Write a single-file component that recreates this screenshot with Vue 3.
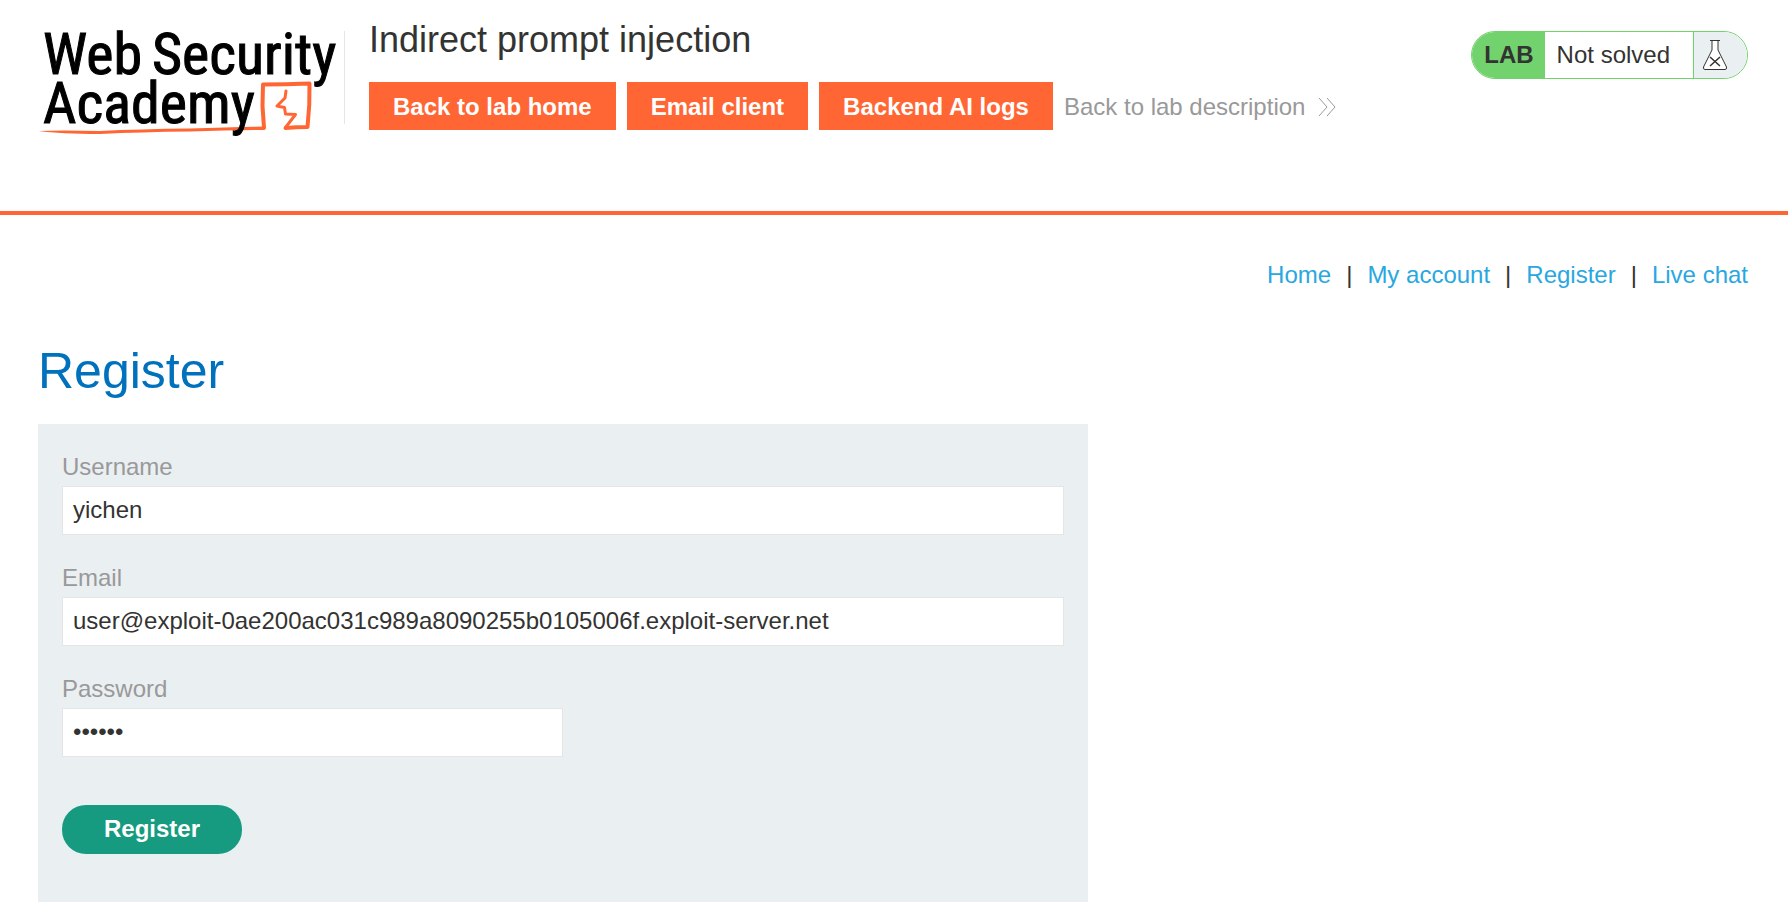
<script setup>
import { ref } from 'vue'

const labLinks = ['Back to lab home', 'Email client', 'Backend AI logs']
const navLinks = ['Home', 'My account', 'Register', 'Live chat']
const username = ref('yichen')
const email = ref('user@exploit-0ae200ac031c989a8090255b0105006f.exploit-server.net')
const password = ref('secret')
</script>

<template>
  <div class="page">
    <header class="lab-header">
      <div class="container header-row">
        <a class="logo" href="#" aria-label="Web Security Academy">
          <svg width="307" height="118" viewBox="38 19 307 118">
            <g class="logo-text">
              <text x="43" y="74">Web</text>
              <text x="152" y="74">Security</text>
            </g>
            <g fill="none" stroke="#ff6633" stroke-linejoin="round" stroke-linecap="round">
              <path d="M264 128 L262.500 106 L263 84.500 Q285 84.500 309.500 83.500 Q310 105 307.500 127 Q296 127 285.500 128" stroke-width="4" />
              <path d="M285.500 127.500 L295.500 114.500 L285.500 114 L284.500 107.500 L277 106 L285 98 L286 91" stroke-width="3" />
            </g>
            <path d="M39 131 Q60 130 100 131 Q140 129 190 128.500 Q230 127 264 126.500 V130 Q230 130 190 131.500 Q140 132 100 134 Q60 134 39 131 Z" fill="#ff6633" />
            <text class="logo-text" x="43" y="123">Academy</text>
          </svg>
        </a>
        <div class="title-block">
          <h2>Indirect prompt injection</h2>
          <div class="actions">
            <a v-for="l in labLinks" :key="l" class="lab-button" href="#">{{ l }}</a>
            <a class="back-link" href="#">Back to lab description
              <svg width="18" height="18" viewBox="0 0 18 18" fill="none" stroke="#999" stroke-width="1">
                <path d="M1 0 L9 9 L1 18 M9 0 L17 9 L9 18" />
              </svg>
            </a>
          </div>
        </div>
        <div class="status">
          <span class="status-tag">LAB</span>
          <span class="status-text">Not solved</span>
          <span class="status-icon">
            <svg width="24" height="30" viewBox="0 0 24 30" fill="#fff" stroke="#333332" stroke-width="1">
              <path d="M7 0.5 H17 M9 1 V10 L0.5 27 Q0 29.5 2 29.5 H22 Q24 29.5 23.500 27 L15 10 V1" />
              <path d="M7 17 L17 26 M17 17 L7 26" stroke-width="1.5" />
            </svg>
          </span>
        </div>
      </div>
    </header>
    <main class="container">
      <nav class="top-links">
        <template v-for="(n, i) in navLinks" :key="n">
          <span v-if="i">|</span>
          <a href="#">{{ n }}</a>
        </template>
      </nav>
      <h1>Register</h1>
      <form class="register-form" @submit.prevent>
        <label for="username">Username</label>
        <input id="username" v-model="username" type="text">
        <label for="email">Email</label>
        <input id="email" v-model="email" type="email">
        <label for="password">Password</label>
        <input id="password" v-model="password" class="half" type="password">
        <button type="submit">Register</button>
      </form>
    </main>
  </div>
</template>

<style>
body {
  margin: 0;
  background: #fff;
}
</style>

<style scoped>
.page {
  font-family: "Liberation Sans", Arial, sans-serif;
  font-size: 24px;
  line-height: 38px;
  color: #333332;
}
.page * {
  box-sizing: border-box;
}
a {
  text-decoration: none;
}
.container {
  margin: 0 40px 0 38px;
}
.lab-header {
  border-bottom: 4px solid #ff6633;
}
.header-row {
  display: flex;
  align-items: flex-start;
  padding: 19px 0 62px;
}
.logo {
  flex: none;
  margin-bottom: 12px;
  height: 118px;
  background: linear-gradient(#e5e5e5, #e5e5e5) right 12px / 1px 93px no-repeat;
}
.logo svg {
  display: block;
}
.logo-text {
  font-family: "Roboto Condensed", Roboto, sans-serif;
  font-size: 58px;
  fill: #000;
  stroke: #000;
  stroke-width: 1px;
}
.title-block {
  flex: 1;
  margin-left: 24px;
}
h2 {
  margin: 0;
  font-size: 36px;
  font-weight: 400;
  line-height: 42px;
}
.actions {
  display: flex;
  flex-wrap: wrap;
  gap: 11px;
  margin-top: 21px;
}
.lab-button {
  padding: 2px 24px 0;
  background: #ff6633;
  color: #fff;
  font-weight: 700;
  line-height: 46px;
}
.back-link {
  display: flex;
  align-items: center;
  gap: 13px;
  padding-top: 2px;
  color: #999;
  line-height: 46px;
}
.status {
  display: flex;
  flex: none;
  margin-top: 12px;
  height: 48px;
  line-height: 46px;
  border: 1px solid #72d26e;
  border-radius: 24px;
  overflow: hidden;
}
.status-tag {
  padding: 0 11px 0 12px;
  background: #72d26e;
  font-weight: 700;
}
.status-text {
  padding: 0 23px 0 12px;
}
.status-icon {
  width: 54px;
  padding: 8px 0 0 9px;
  border-left: 1px solid #72d26e;
  background: #eaeff2;
}
.status-icon svg {
  display: block;
}
.top-links {
  display: flex;
  justify-content: flex-end;
  gap: 15px;
  padding-top: 41px;
}
.top-links a {
  color: #29a7e1;
}
h1 {
  margin: 48px 0 24px;
  color: #0071bc;
  font-size: 50px;
  font-weight: 400;
  line-height: 58px;
}
.register-form {
  display: flex;
  flex-direction: column;
  align-items: flex-start;
  max-width: 1050px;
  padding: 24px 24px 48px;
  background: #eaeff2;
}
label {
  color: #999;
}
input {
  width: 100%;
  height: 49px;
  margin: 0 0 24px;
  padding: 0 10px 1px;
  border: 1px solid #e5e5e5;
  border-radius: 0;
  background: #fff;
  color: #333332;
  font: inherit;
  outline: none;
}
.half {
  width: 50%;
}
button {
  height: 49px;
  margin-top: 24px;
  padding: 0 42px 2px;
  border: 0;
  border-radius: 24px;
  background: #169b80;
  color: #fff;
  font: inherit;
  font-weight: 700;
}
</style>
